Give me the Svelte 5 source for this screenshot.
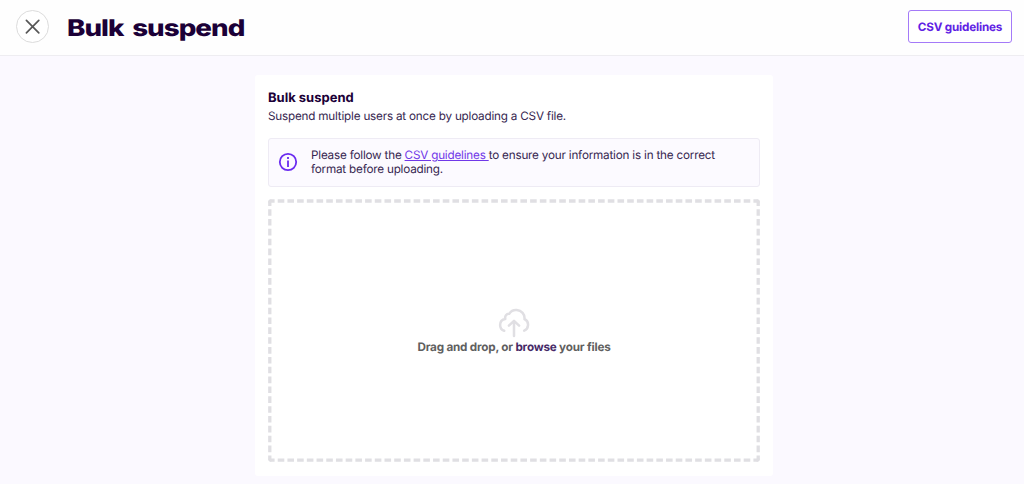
<script>
  let files = $state([]);
  let input;

  function drop(e) {
    e.preventDefault();
    files = [...e.dataTransfer.files];
  }
</script>

<div class="page">
  <header>
    <button class="close" aria-label="Close">
      <svg width="16" height="16" viewBox="0 0 16 16">
        <path d="M1.4 1.4 13.8 13.8M13.8 1.4 1.4 13.8" />
      </svg>
    </button>
    <h1>Bulk suspend</h1>
    <button class="guide">CSV guidelines</button>
  </header>

  <main>
    <h2>Bulk suspend</h2>
    <p class="sub">Suspend multiple users at once by uploading a CSV file.</p>

    <div class="info">
      <svg width="20" height="20" viewBox="0 0 20 20">
        <circle cx="10" cy="10" r="8.2" />
        <path d="M10 8.6V15" />
        <path d="M10 5V7" />
      </svg>
      <p>
        Please follow the <a href="#guidelines">CSV guidelines&nbsp;</a>to ensure your information is in the correct format before uploading.
      </p>
    </div>

    <div class="drop" role="region" aria-label="Upload" ondragover={(e) => e.preventDefault()} ondrop={drop}>
      <svg class="frame" viewBox="0 0 492 263">
        <path class="across" d="M0 2H492M0 261.2H492" />
        <path class="down" d="M1.8 .3V263M490.2 .3V263" />
      </svg>
      <svg class="cloud" width="32" height="30" viewBox="0 0 32 30">
        <path d="M6.2 22.8C3.6 21.9 2.1 19.8 2.1 17C2.1 13.6 4.2 11.4 7.3 10.9C6.6 8 8.5 5.5 11.2 5.8C12.9 3.1 15.7 1.7 18.8 2C23.5 2.4 27 6.3 26.5 11.2C29 12.3 30.3 14.6 30 17.4C29.8 19.8 28.4 21.8 26.2 22.7" />
        <path d="M16 28V13.2M10.9 17.6 16 12.8 21.1 17.6" />
      </svg>
      <p>Drag and drop, or <button class="browse" onclick={() => input.click()}>browse</button> your files</p>
      <input bind:this={input} type="file" accept=".csv" hidden />
    </div>
  </main>
</div>

<style>
  :global(body) { margin: 0; background: #fbf9ff; }
  .page {
    height: 484px; overflow: hidden;
    font-family: Inter, "Liberation Sans", sans-serif;
    font-size: 11.7px; letter-spacing: -.2px; color: #36264f;
    text-rendering: geometricPrecision;
  }
  h1, h2, p { margin: 0; }
  button { font: inherit; letter-spacing: inherit; cursor: pointer; text-rendering: inherit; }
  svg { fill: none; }

  header {
    display: flex; align-items: center; box-sizing: border-box;
    height: 56px; padding: 0 12px 2px 16px;
    background: #fefefe; border-bottom: 1px solid #eeedf1;
  }
  .close {
    display: grid; place-items: center; box-sizing: border-box;
    width: 33px; height: 33px; padding: 0;
    background: #fff; border: 1px solid #dcdcdc; border-radius: 50%;
  }
  .close svg { stroke: #575757; stroke-width: 1.7; stroke-linecap: round; }
  h1 {
    margin: 2px 0 0 18px; color: #1b0037;
    font-size: 23px; font-weight: 800; line-height: 30px;
    white-space: nowrap; letter-spacing: -.8px; word-spacing: 3px;
    transform: scaleX(1.205); transform-origin: left;
  }
  .guide {
    box-sizing: border-box; width: 104px; height: 33px; margin-left: auto; padding: 0;
    background: #fff; border: 1px solid #a47af8; border-radius: 3px;
    color: #5f21e4; font-weight: 700;
  }

  main {
    box-sizing: border-box; width: 518px; height: 401px;
    margin: 19px 0 0 255px; padding: 15px 13px 0;
    background: #fff; border-radius: 3px;
  }
  h2 { color: #1b0037; font-size: 13px; font-weight: 700; letter-spacing: 0; line-height: 17px; }
  .sub { margin-top: 1px; line-height: 16px; }

  .info {
    display: flex; align-items: center; box-sizing: border-box;
    height: 49px; margin-top: 14px; padding: 0 20px 2px 9px; gap: 13px;
    background: #fcfaff; border: 1px solid #eeebf4; border-radius: 3px;
    line-height: 14px;
  }
  .info svg { flex: none; stroke: #6a2bf0; stroke-width: 1.8; }
  .info a { color: #7038e8; }

  .drop {
    position: relative; display: flex; flex-direction: column;
    align-items: center; justify-content: center; box-sizing: border-box;
    height: 263px; margin-top: 12px; padding-top: 2px;
    color: #5f5f5f; font-weight: 700;
  }
  .frame {
    position: absolute; inset: 0; width: 100%; height: 100%;
    border-radius: 4px; overflow: hidden; pointer-events: none;
  }
  .frame path { stroke: #e0dfe3; stroke-width: 3.3; }
  .across { stroke-dasharray: 6.6 3.108; }
  .down { stroke-dasharray: 6.6 3.25; }
  .cloud { stroke: #e0dfe3; stroke-width: 2.5; stroke-linecap: round; stroke-linejoin: round; }
  .drop p { line-height: 16px; padding-top: 1px; }
  .browse { padding: 0; border: 0; background: none; color: #462967; }
</style>
